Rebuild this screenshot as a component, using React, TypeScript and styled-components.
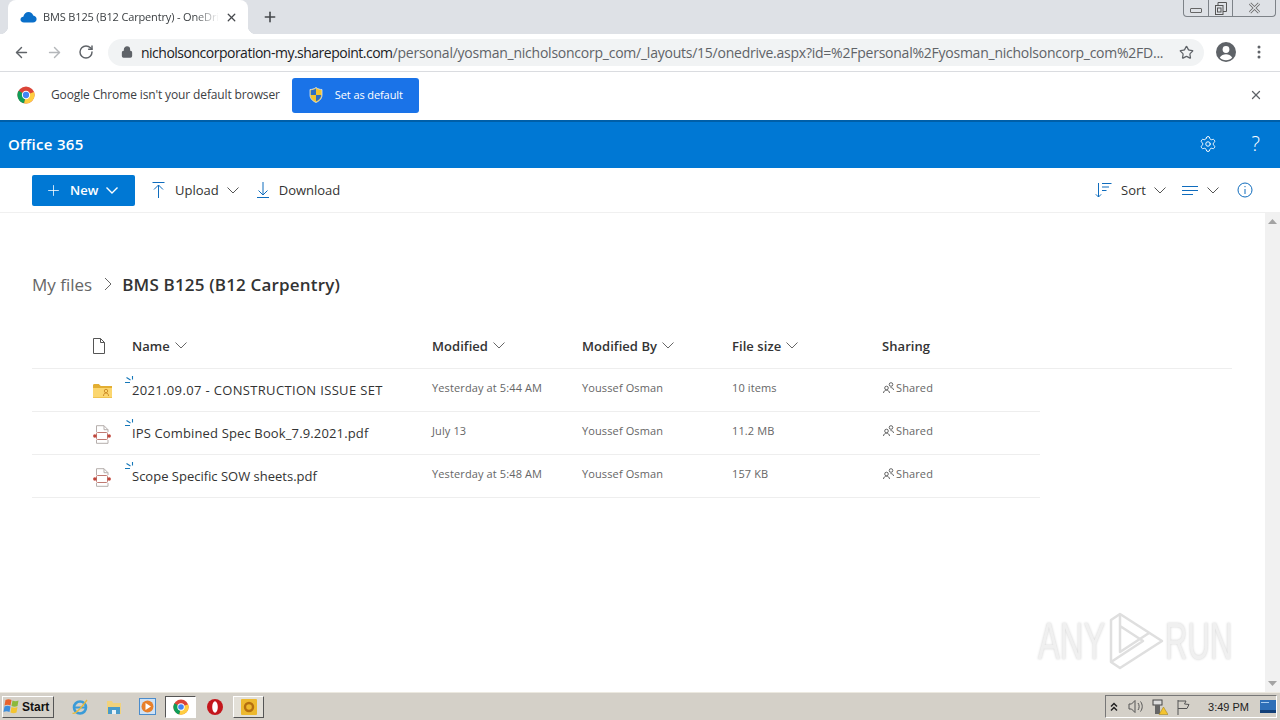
import React from "react";
import styled, { createGlobalStyle } from "styled-components";
import { ArrowLeft, ArrowRight, RotateCw, Lock, Star, X, Plus, Settings } from "lucide-react";

const GlobalStyle = createGlobalStyle`
  html, body { margin: 0; padding: 0; background: #fff; overflow: hidden; }
  body { font-family: "Open Sans", "Liberation Sans", sans-serif; }
  #root { width: 1280px; height: 720px; }
  * { box-sizing: border-box; }
`;

const files = [
  { name: "2021.09.07 - CONSTRUCTION ISSUE SET", kind: "folder", spacing: 0.34, modified: "Yesterday at 5:44 AM", by: "Youssef Osman", size: "10 items" },
  { name: "IPS Combined Spec Book_7.9.2021.pdf", kind: "pdf", spacing: 0.14, modified: "July 13", by: "Youssef Osman", size: "11.2 MB" },
  { name: "Scope Specific SOW sheets.pdf", kind: "pdf", spacing: 0, modified: "Yesterday at 5:48 AM", by: "Youssef Osman", size: "157 KB" },
];

const Chevron = ({ color = "#555", weight = 1 }: { color?: string; weight?: number }) => (
  <svg width="12" height="7" viewBox="0 0 12 7" fill="none" stroke={color} strokeWidth={weight}>
    <path d="M.5.5 6 6 11.500.5" />
  </svg>
);

const CloudIcon = () => (
  <svg width="17" height="12" viewBox="0 0 17 12">
    <path d="M4 11.500C1.800 11.500.5 10.200.5 8.600.5 7 1.800 5.800 3.300 5.800 4 3 6 1 8.600 1c2.200 0 4 1.400 4.600 3.400 2 .2 3.400 1.800 3.400 3.600 0 2-1.500 3.500-3.600 3.500z" fill="#0a6fc9" />
  </svg>
);

const ChromeLogo = ({ size }: { size: number }) => (
  <svg width={size} height={size} viewBox="0 0 20 20">
    <circle cx="10" cy="10" r="9.500" fill="#db4437" />
    <path d="M10 10 1.800 5.200A9.500 9.500 0 0 0 8 19.300z" fill="#0f9d58" />
    <path d="M10 10 18.900 6.600A9.500 9.500 0 0 1 8 19.300z" fill="#ffcd40" />
    <circle cx="10" cy="10" r="4.600" fill="#fff" />
    <circle cx="10" cy="10" r="3.500" fill="#4285f4" />
  </svg>
);

const ShieldIcon = () => (
  <svg width="16" height="16" viewBox="0 0 16 16">
    <path d="M8 .5c2 1.500 4 2 6 2V8c0 3.500-2.500 6-6 7.500C4.500 14 2 11.500 2 8V2.500c2 0 4-.5 6-2z" fill="#f4c430" stroke="#d9e4ef" strokeWidth=".8" />
    <path d="M8 1.500V8H2.800V3.200C4.800 3 6.500 2.500 8 1.500zM8 8h5.200c0 3-2.200 5-5.200 6.300z" fill="#2f6fc4" />
  </svg>
);

const UploadIcon = () => (
  <svg width="15" height="18" viewBox="0 0 15 18" fill="none" stroke="#0f6cbd" strokeWidth="1">
    <path d="M1.500 1.500h12M7.500 17V4M3 8.500 7.500 4 12 8.500" />
  </svg>
);

const DownloadIcon = () => (
  <svg width="14" height="18" viewBox="0 0 14 18" fill="none" stroke="#0f6cbd" strokeWidth="1">
    <path d="M1 16.500h12M7 1v13M2.500 9.500 7 14l4.500-4.500" />
  </svg>
);

const SortIcon = () => (
  <svg width="17" height="16" viewBox="0 0 17 16" fill="none" stroke="#0f6cbd" strokeWidth="1">
    <path d="M3.500 1v14M.8 12.300l2.700 2.700 2.700-2.700M7 1.500h9.500M7 5h7M7 8.500h4.500" />
  </svg>
);

const ViewIcon = () => (
  <svg width="17" height="11" viewBox="0 0 17 11" fill="none" stroke="#0f6cbd" strokeWidth="1">
    <path d="M0 1.500h16M0 5.500h16M0 9.500h11" />
  </svg>
);

const InfoIcon = () => (
  <svg width="16" height="16" viewBox="0 0 16 16" fill="none" stroke="#0f6cbd" strokeWidth="1">
    <circle cx="8" cy="8" r="7" />
    <path d="M8 7v5M8 4v1.200" />
  </svg>
);

const PageIcon = () => (
  <svg width="14" height="16" viewBox="0 0 14 16" fill="none" stroke="#555" strokeWidth="1">
    <path d="M1.500.5h7l4 4v11h-11zM8.500.5v4h4" />
  </svg>
);

const FolderIcon = () => (
  <svg width="19" height="14" viewBox="0 0 19 14">
    <path d="M0 1.500C0 .7.500 0 1.300 0h4.500l2 2H19v12H0z" fill="#e3ae32" />
    <path d="M0 4h19v9.500H0z" fill="#fbd66f" />
    <circle cx="13" cy="7" r="1.700" fill="none" stroke="#cf8f2a" />
    <path d="M10.500 12c0-2 1-3 2.500-3s2.500 1 2.500 3" fill="none" stroke="#cf8f2a" />
  </svg>
);

const PdfIcon = () => (
  <svg width="18" height="19" viewBox="0 0 18 19" fill="none">
    <path d="M3.500 7V.7H11l4 4V7M3.500 15v3.300H15V15" stroke="#b5aeac" />
    <path d="M11 .7v4h4" stroke="#b5aeac" />
    <rect x="3.500" y="7.500" width="11" height="7" rx="1" stroke="#bf7a72" strokeWidth="1" />
    <circle cx="1.800" cy="11" r="1.700" fill="#c1453a" />
    <circle cx="16.200" cy="11" r="1.700" fill="#c1453a" />
  </svg>
);

const Sparkle = () => (
  <svg width="10" height="9" viewBox="0 0 10 9" fill="none" stroke="#1577b8" strokeWidth="1.100">
    <path d="M7.500 0v3.500M1.500 1.500 5.500 4M0 6.500h5" />
  </svg>
);

const SharedIcon = () => (
  <svg width="11" height="11" viewBox="0 0 11 11" fill="none" stroke="#555" strokeWidth=".9">
    <circle cx="3.500" cy="6" r="1.800" />
    <path d="M.5 11c0-1.600 1.300-2.800 3-2.800s3 1.200 3 2.800" />
    <circle cx="8" cy="2.500" r="1.800" />
    <path d="M7.500 5.600c2 0 3 1 3 2.400" />
  </svg>
);

const WinFlag = () => (
  <svg width="18" height="17" viewBox="0 0 17 17">
    <path d="M2 2c2-1 4-1 6 0L7 7.500c-2-1-4-1-6 0z" fill="#e8622c" />
    <path d="M9 2.500c2 1 4 1 6 0L14 8c-2 1-4 1-6 0z" fill="#8cb93c" />
    <path d="M1 8.500c2-1 4-1 6 0L6 14c-2-1-4-1-6 0z" fill="#3c8ddc" />
    <path d="M8 9c2 1 4 1 6 0l-1 5.500c-2 1-4 1-6 0z" fill="#f4c430" />
  </svg>
);

const IeIcon = () => (
  <svg width="18" height="20" viewBox="0 0 18 20" fill="none">
    <circle cx="9" cy="10.500" r="6" stroke="#3a9bd8" strokeWidth="2.600" />
    <path d="M4 10.500h10" stroke="#3a9bd8" strokeWidth="2" />
    <path d="M1.500 16C4 18 10 11 16 3" stroke="#e6b93a" strokeWidth="1.300" />
  </svg>
);

const ExplorerIcon = () => (
  <svg width="16" height="16" viewBox="0 0 16 16">
    <path d="M1 2h5l1 2h8v11H1z" fill="#f1d27c" />
    <path d="M2 8h12v7H2z" fill="#4a9bc9" />
    <path d="M6 15v-4h4v4z" fill="#e8f2f8" />
  </svg>
);

const MediaIcon = () => (
  <svg width="17" height="17" viewBox="0 0 17 17">
    <rect x=".5" y=".5" width="16" height="16" fill="#cfe2f5" stroke="#4a8ccc" />
    <circle cx="8.500" cy="8.500" r="6" fill="#e8802a" />
    <path d="M6.500 5v7L12 8.500z" fill="#fff" />
  </svg>
);

const OperaIcon = () => (
  <svg width="16" height="16" viewBox="0 0 16 16">
    <circle cx="8" cy="8" r="8" fill="#c4161c" />
    <ellipse cx="8" cy="8" rx="2.800" ry="5.800" fill="#fff" />
  </svg>
);

const NotesIcon = () => (
  <svg width="16" height="16" viewBox="0 0 16 16">
    <rect width="16" height="16" rx="1" fill="#edb92e" />
    <circle cx="8" cy="8" r="4" fill="none" stroke="#b56f10" strokeWidth="2.400" />
  </svg>
);

const PersonIcon = () => (
  <svg width="22" height="22" viewBox="0 0 22 22">
    <circle cx="11" cy="11" r="10" fill="#5f6368" />
    <circle cx="11" cy="8.500" r="3.400" fill="#fff" />
    <path d="M4.800 16.500c1.500-2.400 3.800-3.300 6.200-3.300s4.700.9 6.200 3.300c-1.400 1.800-3.600 2.700-6.200 2.700s-4.800-.9-6.200-2.700z" fill="#fff" />
  </svg>
);

const Kebab = () => (
  <svg width="4" height="14" viewBox="0 0 4 14" fill="#5f6368">
    <circle cx="2" cy="2" r="1.500" />
    <circle cx="2" cy="7" r="1.500" />
    <circle cx="2" cy="12" r="1.500" />
  </svg>
);

const CloseGlyph = () => (
  <svg width="13" height="12" viewBox="0 0 13 12" fill="none">
    <path d="M2 1.500l9 9M11 1.500l-9 9" stroke="#666" strokeWidth="3" />
    <path d="M2 1.500l9 9M11 1.500l-9 9" stroke="#dee1e6" strokeWidth="1.400" />
  </svg>
);

const WatermarkLogo = () => (
  <svg width="57" height="62" viewBox="0 0 57 62" fill="none" stroke="#dfdfdf" strokeWidth="2.500" strokeLinejoin="round">
    <path d="M12 4 54 31 12 58 3 52V10z" />
    <path d="M12 4v38l29-19M3 52l32-21L12 16" />
  </svg>
);

const VolumeTray = () => (
  <svg width="16" height="15" viewBox="0 0 16 15" fill="none" stroke="#555" strokeWidth="1">
    <path d="M1 5h2.500L7 1.500v12L3.500 10H1zM10 4c1.500 2 1.500 5 0 7M12.500 2.500c2.300 3 2.300 7 0 10" />
  </svg>
);

const NetworkTray = () => (
  <svg width="16" height="16" viewBox="0 0 16 16">
    <rect x="1" y="1" width="9" height="5" fill="#ddd" stroke="#444" />
    <rect x="3" y="6" width="5" height="9" fill="#666" />
    <path d="M11.500 8 16 15.500H7z" fill="#f4c430" stroke="#9a7a10" strokeWidth=".5" />
  </svg>
);

const FlagTray = () => (
  <svg width="16" height="16" viewBox="0 0 16 16" fill="none" stroke="#555" strokeWidth="1">
    <path d="M2 1v15M2 2h8L8.500 5l4.500.5-2 4H2" />
  </svg>
);

const DesktopTray = () => (
  <svg width="16" height="14" viewBox="0 0 16 14">
    <rect width="16" height="12" fill="#2d6fb8" />
    <rect y="10" width="16" height="3" fill="#123f77" />
    <rect x="1" y="2" width="8" height="1" fill="#a8cdf0" />
  </svg>
);

const DoubleArrow = () => (
  <svg width="8" height="10" viewBox="0 0 8 10" fill="none" stroke="#222" strokeWidth="1.500">
    <path d="M1 4.500 4 1.500l3 3M1 8.500l3-3 3 3" />
  </svg>
);

const Triangle = ({ down }: { down: boolean }) => (
  <svg width="9" height="5" viewBox="0 0 9 5" fill="#a3a3a3">
    <path d={down ? "M0 0h9L4.500 5z" : "M0 5h9L4.500 0z"} />
  </svg>
);

export default function App() {
  return (
    <Screen>
      <GlobalStyle />
      <TabStrip>
        <Tab>
          <CloudIcon />
          <TabTitle>BMS B125 (B12 Carpentry) - OneDrive</TabTitle>
          <X size={13} strokeWidth={2.4} color="#45484c" />
        </Tab>
        <NewTab>
          <Plus size={16} strokeWidth={2.4} />
        </NewTab>
        <WindowControls>
          <WindowButton $width={24}>
            <MinimizeGlyph />
          </WindowButton>
          <WindowButton $width={24}>
            <svg width="12" height="13" viewBox="0 0 12 13" fill="none" stroke="#555">
              <rect x=".5" y="3.500" width="7.500" height="9" />
              <rect x="2.500" y="6" width="3.500" height="4" />
              <path d="M3 3V.5h8.500v9H8" />
            </svg>
          </WindowButton>
          <WindowButton $width={43}>
            <CloseGlyph />
          </WindowButton>
        </WindowControls>
      </TabStrip>

      <Toolbar>
        <NavButtons>
          <ArrowLeft size={17} strokeWidth={2} color="#5f6368" />
          <ArrowRight size={17} strokeWidth={2} color="#b4b7ba" />
          <RotateCw size={16} strokeWidth={2.2} color="#5f6368" />
        </NavButtons>
        <AddressBar>
          <Lock size={12} strokeWidth={2.6} color="#5f6368" fill="#5f6368" />
          <Url>
            <strong>nicholsoncorporation-my.sharepoint.com</strong>
            /personal/yosman_nicholsoncorp_com/_layouts/15/onedrive.aspx?id=%2Fpersonal%2Fyosman_nicholsoncorp_com%2FD...
          </Url>
          <Star size={15} strokeWidth={2} color="#5f6368" />
        </AddressBar>
        <ToolbarEnd>
          <PersonIcon />
          <Kebab />
        </ToolbarEnd>
      </Toolbar>

      <InfoBar>
        <ChromeLogo size={18} />
        <InfoText>Google Chrome isn't your default browser</InfoText>
        <DefaultButton>
          <ShieldIcon />
          <span>Set as default</span>
        </DefaultButton>
        <InfoClose>
          <X size={14} strokeWidth={2.2} color="#5f6368" />
        </InfoClose>
      </InfoBar>

      <SuiteBar>
        <SuiteName>Office 365</SuiteName>
        <SuiteIcons>
          <Settings size={18} strokeWidth={1.3} color="#fff" />
          <HelpGlyph>?</HelpGlyph>
        </SuiteIcons>
      </SuiteBar>

      <CommandBar>
        <NewButton>
          <Plus size={17} strokeWidth={1.1} />
          <b>New</b>
          <Chevron color="#fff" weight={1.4} />
        </NewButton>
        <CommandItem $after={1}>
          <UploadIcon />
          <span>Upload</span>
          <Chevron />
        </CommandItem>
        <CommandItem $after={0}>
          <DownloadIcon />
          <span>Download</span>
        </CommandItem>
        <CommandEnd>
          <CommandItem $after={0}>
            <SortIcon />
            <span>Sort</span>
            <Chevron />
          </CommandItem>
          <CommandItem $after={0}>
            <ViewIcon />
            <Chevron />
          </CommandItem>
          <InfoSpot>
            <InfoIcon />
          </InfoSpot>
        </CommandEnd>
      </CommandBar>

      <Body>
        <Content>
          <Breadcrumb>
            <Crumb>My files</Crumb>
            <svg width="10" height="14" viewBox="0 0 10 14" fill="none" stroke="#666" strokeWidth="1">
              <path d="M2 1l6 6-6 6" />
            </svg>
            <CurrentCrumb>BMS B125 (B12 Carpentry)</CurrentCrumb>
          </Breadcrumb>

          <HeaderRow>
            <span />
            <PageIcon />
            <HeaderCell>
              Name <Chevron color="#666" />
            </HeaderCell>
            <HeaderCell>
              Modified <Chevron color="#666" />
            </HeaderCell>
            <HeaderCell>
              Modified By <Chevron color="#666" />
            </HeaderCell>
            <HeaderCell>
              File size <Chevron color="#666" />
            </HeaderCell>
            <HeaderCell>Sharing</HeaderCell>
          </HeaderRow>

          {files.map((file) => (
            <FileRow key={file.name}>
              <span />
              <IconCell>{file.kind === "folder" ? <FolderIcon /> : <PdfIcon />}</IconCell>
              <NameCell $spacing={file.spacing}>
                <SparkleSpot>
                  <Sparkle />
                </SparkleSpot>
                {file.name}
              </NameCell>
              <MetaCell>{file.modified}</MetaCell>
              <MetaCell>{file.by}</MetaCell>
              <MetaCell>{file.size}</MetaCell>
              <MetaCell>
                <SharedIcon /> Shared
              </MetaCell>
            </FileRow>
          ))}
          <Watermark>
            <WatermarkWord $squeeze={0.63}>ANY</WatermarkWord>
            <WatermarkLogo />
            <WatermarkWord $squeeze={0.6}>RUN</WatermarkWord>
          </Watermark>
        </Content>
        <Scrollbar>
          <Triangle down={false} />
          <Triangle down />
        </Scrollbar>
      </Body>

      <Taskbar>
        <StartButton>
          <WinFlag />
          Start
        </StartButton>
        <QuickLaunch>
          <IeIcon />
          <ExplorerIcon />
          <MediaIcon />
        </QuickLaunch>
        <TaskButton $active>
          <ChromeLogo size={16} />
        </TaskButton>
        <OperaSpot>
          <OperaIcon />
        </OperaSpot>
        <TaskButton $active={false}>
          <NotesIcon />
        </TaskButton>
        <Tray>
          <DoubleArrow />
          <VolumeTray />
          <NetworkTray />
          <FlagTray />
          <Clock>3:49 PM</Clock>
          <DesktopTray />
        </Tray>
      </Taskbar>
    </Screen>
  );
}

const Screen = styled.div`
  width: 1280px;
  height: 720px;
  display: flex;
  flex-direction: column;
  overflow: hidden;
`;

const TabStrip = styled.div`
  height: 34px;
  flex: none;
  background: #dee1e6;
  display: flex;
  align-items: flex-end;
  padding-left: 8px;
`;

const Tab = styled.div`
  position: relative;
  width: 240px;
  height: 34px;
  background: #fff;
  border-radius: 8px 8px 0 0;
  display: flex;
  align-items: center;
  padding: 0 10px 0 12px;
  gap: 6px;
  color: #3c4043;
  &::before,
  &::after {
    content: "";
    position: absolute;
    bottom: 0;
    width: 8px;
    height: 8px;
  }
  &::before {
    left: -8px;
    background: radial-gradient(circle at 0 0, transparent 8px, #fff 8.5px);
  }
  &::after {
    right: -8px;
    background: radial-gradient(circle at 100% 0, transparent 8px, #fff 8.5px);
  }
`;

const TabTitle = styled.div`
  flex: 1;
  min-width: 0;
  overflow: hidden;
  white-space: nowrap;
  font-size: 11px;
  line-height: 14px;
  letter-spacing: -0.15px;
  -webkit-mask-image: linear-gradient(90deg, #000 86%, transparent);
  mask-image: linear-gradient(90deg, #000 86%, transparent);
`;

const NewTab = styled.div`
  height: 34px;
  margin-left: 14px;
  display: flex;
  align-items: center;
  color: #45484c;
`;

const WindowControls = styled.div`
  margin-left: auto;
  margin-right: 4px;
  align-self: flex-start;
  height: 17px;
  display: flex;
  border: 1px solid #7d8288;
  border-top: none;
  border-radius: 0 0 4px 4px;
`;

const WindowButton = styled.div<{ $width: number }>`
  width: ${(p) => p.$width}px;
  display: flex;
  align-items: center;
  justify-content: center;
  & + & {
    border-left: 1px solid #7d8288;
  }
`;

const MinimizeGlyph = styled.div`
  width: 12px;
  height: 5px;
  margin-top: 5px;
  border: 1px solid #666;
  border-radius: 1px;
`;

const Toolbar = styled.div`
  height: 38px;
  flex: none;
  background: #fff;
  border-bottom: 1px solid #dadce0;
  padding-bottom: 1px;
  display: flex;
  align-items: center;
`;

const NavButtons = styled.div`
  width: 108px;
  padding-left: 13px;
  display: flex;
  align-items: center;
  gap: 15.5px;
`;

const AddressBar = styled.div`
  width: 1096px;
  height: 27px;
  background: #f1f3f4;
  border-radius: 14px;
  display: flex;
  align-items: center;
  padding: 0 10px 0 13px;
  gap: 8px;
`;

const Url = styled.div`
  flex: 1;
  min-width: 0;
  overflow: hidden;
  white-space: nowrap;
  font-size: 14px;
  letter-spacing: -0.24px;
  color: #5f6368;
  strong {
    font-weight: 400;
    letter-spacing: -0.5px;
    color: #202124;
  }
`;

const ToolbarEnd = styled.div`
  flex: 1;
  display: flex;
  align-items: center;
  justify-content: flex-end;
  gap: 20px;
  padding-right: 19px;
`;

const InfoBar = styled.div`
  height: 48px;
  flex: none;
  background: #fff;
  display: flex;
  align-items: center;
  padding: 0 17px 2px;
`;

const InfoText = styled.span`
  margin: -1px 0 0 16px;
  font-size: 12px;
  letter-spacing: -0.13px;
  color: #3c4043;
`;

const DefaultButton = styled.div`
  margin-left: 12px;
  width: 127px;
  height: 35px;
  background: #1a73e8;
  border-radius: 3px;
  color: #fff;
  font-size: 11px;
  letter-spacing: -0.1px;
  display: flex;
  align-items: center;
  padding: 0 0 1px 16px;
  gap: 11px;
  span {
    margin-top: -1px;
  }
`;

const InfoClose = styled.div`
  margin-left: auto;
  display: flex;
`;

const SuiteBar = styled.div`
  height: 48px;
  flex: none;
  background: #0078d4;
  border-top: 2px solid #005fa8;
  display: flex;
  align-items: center;
  justify-content: space-between;
  padding: 0 20px 2px 8px;
  color: #fff;
`;

const SuiteName = styled.div`
  font-size: 15px;
  font-weight: 600;
  letter-spacing: 0.3px;
`;

const SuiteIcons = styled.div`
  display: flex;
  align-items: center;
  gap: 35px;
`;

const HelpGlyph = styled.span`
  font-size: 20px;
  line-height: 22px;
  font-weight: 300;
`;

const CommandBar = styled.div`
  height: 45px;
  flex: none;
  background: #fff;
  border-bottom: 1px solid #f0f0f0;
  display: flex;
  align-items: center;
  padding: 0 27px 0 32px;
  gap: 16px;
  font-size: 13px;
  color: #333;
`;

const NewButton = styled.div`
  width: 103px;
  height: 31px;
  background: #0078d4;
  border-radius: 2px;
  color: #fff;
  display: flex;
  align-items: center;
  padding-left: 13px;
  gap: 8px;
  b {
    font-weight: 600;
  }
`;

const CommandItem = styled.div<{ $after: number }>`
  display: flex;
  align-items: center;
  gap: 8px;
  margin-right: ${(p) => p.$after}px;
  span {
    margin-left: 1px;
  }
`;

const CommandEnd = styled.div`
  margin-left: auto;
  display: flex;
  align-items: center;
  gap: 16px;
`;

const InfoSpot = styled.div`
  display: flex;
  margin-left: 2px;
`;

const Body = styled.div`
  flex: 1;
  min-height: 0;
  display: flex;
`;

const Content = styled.div`
  flex: 1;
  position: relative;
  padding: 59px 33px 0 32px;
`;

const Breadcrumb = styled.div`
  height: 24px;
  display: flex;
  align-items: center;
  gap: 10px;
`;

const Crumb = styled.span`
  font-size: 17px;
  color: #666;
  margin-right: 1px;
`;

const CurrentCrumb = styled.span`
  font-size: 17px;
  font-weight: 600;
  letter-spacing: 0.18px;
  color: #333;
  margin-left: -1px;
`;

const columns = "60px 40px 300px 150px 150px 150px";

const HeaderRow = styled.div`
  margin-top: 28px;
  height: 45px;
  padding-bottom: 1px;
  display: grid;
  grid-template-columns: ${columns} 1fr;
  align-items: center;
  border-bottom: 1px solid #eee;
`;

const HeaderCell = styled.div`
  font-size: 13px;
  font-weight: 600;
  letter-spacing: 0.06px;
  color: #333;
  display: flex;
  align-items: center;
  gap: 5px;
`;

const FileRow = styled.div`
  width: 1008px;
  height: 43px;
  display: grid;
  grid-template-columns: ${columns} 1fr;
  align-items: center;
  border-bottom: 1px solid #eee;
`;

const IconCell = styled.div`
  display: flex;
  align-items: center;
  height: 20px;
  padding-left: 1px;
  margin-top: 2px;
`;

const NameCell = styled.div<{ $spacing: number }>`
  position: relative;
  font-size: 13px;
  letter-spacing: ${(p) => p.$spacing}px;
  color: #333;
  white-space: nowrap;
`;

const SparkleSpot = styled.span`
  position: absolute;
  left: -7px;
  top: -5px;
  display: flex;
`;

const MetaCell = styled.div`
  font-size: 11px;
  letter-spacing: 0.12px;
  color: #666;
  display: flex;
  align-items: center;
  gap: 2px;
  margin-top: -6px;
  svg {
    margin-left: 1px;
  }
`;

const Watermark = styled.div`
  position: absolute;
  right: 33px;
  bottom: 20px;
  display: flex;
  align-items: center;
  svg {
    margin-left: 3px;
  }
`;

const WatermarkWord = styled.span<{ $squeeze: number }>`
  width: 67px;
  font-size: 52px;
  line-height: 52px;
  font-family: "Liberation Sans", sans-serif;
  color: #f0f0f0;
  white-space: nowrap;
  text-shadow: 0 0 3px #cfcfcf;
  transform: scaleX(${(p) => p.$squeeze});
  transform-origin: left center;
`;

const Scrollbar = styled.div`
  width: 15px;
  background: #f1f1f1;
  display: flex;
  flex-direction: column;
  justify-content: space-between;
  align-items: center;
  padding: 6px 0;
`;

const Taskbar = styled.div`
  height: 28px;
  flex: none;
  background: #d4d0c8;
  border-top: 1px solid #ece9e0;
  display: flex;
  align-items: center;
  padding-left: 2px;
`;

const StartButton = styled.div`
  width: 52px;
  height: 22px;
  background: #d4d0c8;
  border: 1px solid;
  border-color: #fff #555 #555 #fff;
  display: flex;
  align-items: center;
  gap: 1px;
  font-size: 12px;
  font-weight: 700;
  font-family: "Liberation Sans", sans-serif;
  color: #111;
`;

const QuickLaunch = styled.div`
  margin-left: 17px;
  width: 94px;
  display: flex;
  align-items: center;
  gap: 17px;
`;

const TaskButton = styled.div<{ $active: boolean }>`
  width: 31px;
  height: 22px;
  background: ${(p) => (p.$active ? "#fff" : "#e3e0d8")};
  border: 1px solid;
  border-color: ${(p) => (p.$active ? "#555 #fff #fff #555" : "#fff #555 #555 #fff")};
  display: flex;
  align-items: center;
  justify-content: center;
`;

const OperaSpot = styled.div`
  width: 37px;
  display: flex;
  justify-content: center;
`;

const Tray = styled.div`
  margin-left: auto;
  height: 23px;
  margin-right: 3px;
  border: 1px solid;
  border-color: #777 #fff #fff #777;
  display: flex;
  align-items: center;
  gap: 8px;
  padding-left: 4px;
  svg:nth-child(2) {
    margin-left: 2px;
  }
`;

const Clock = styled.span`
  margin: 0 3px 0 8px;
  font-size: 11px;
  color: #222;
  font-family: "Liberation Sans", sans-serif;
`;
